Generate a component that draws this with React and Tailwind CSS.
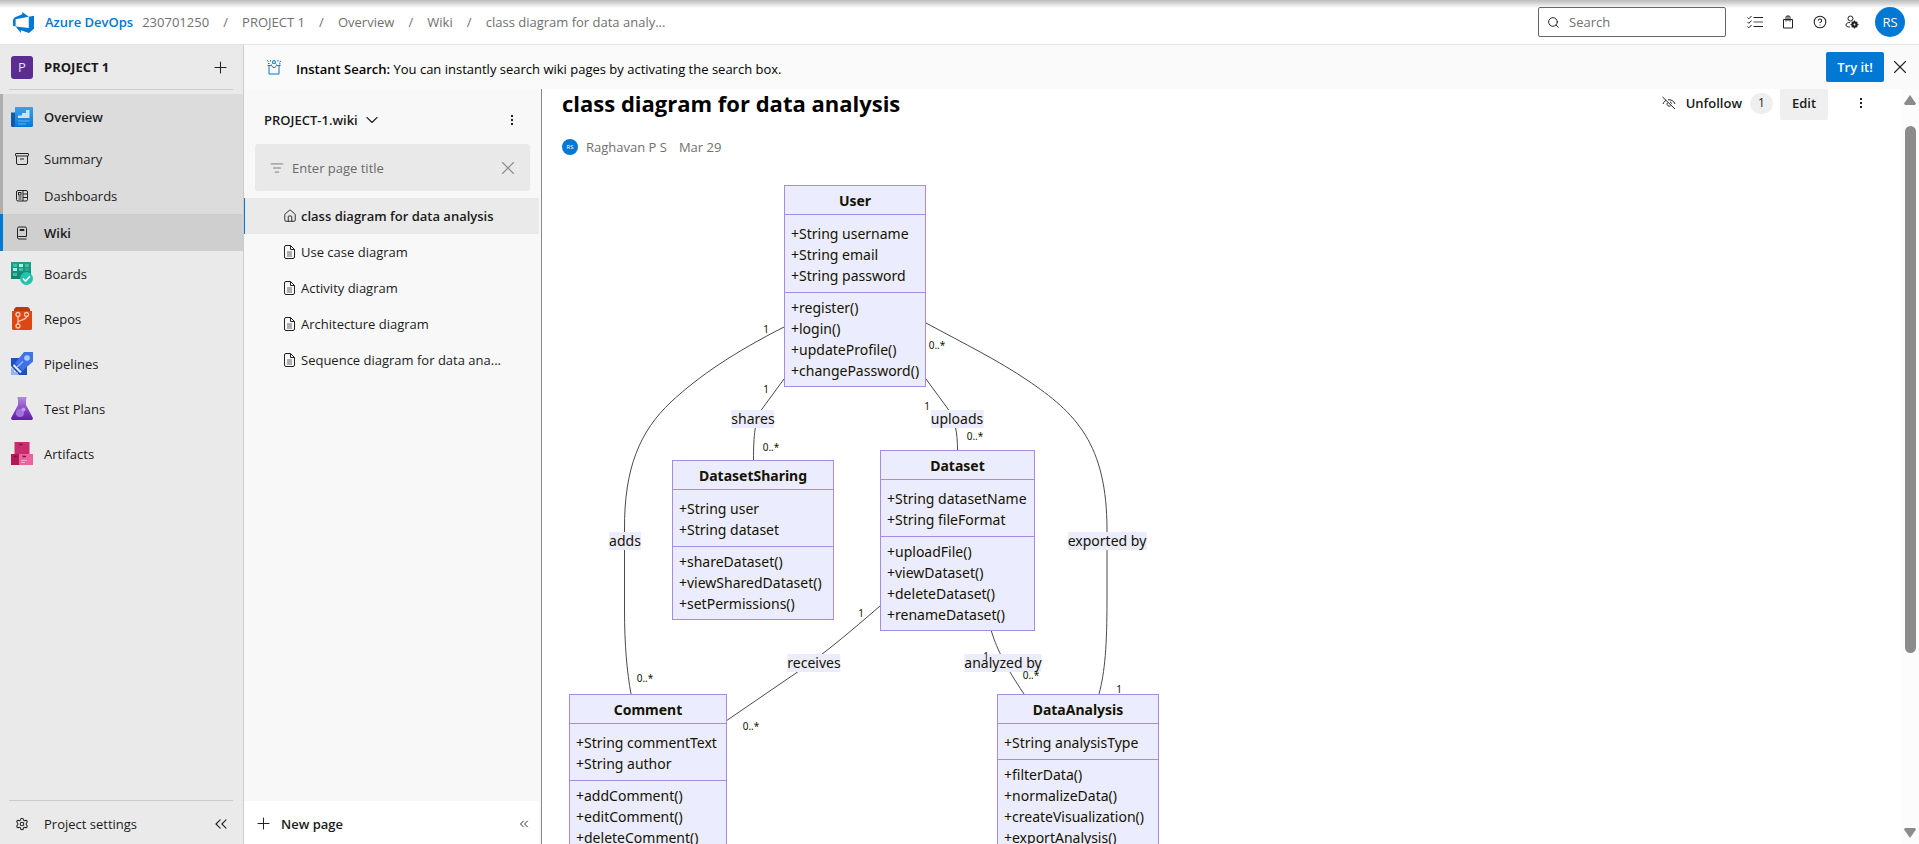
import React from "react";
import {
  Plus, X, ChevronDown, ChevronsLeft, Search, CircleHelp, Settings, House, ListFilter,
} from "lucide-react";

const ink = "stroke-[#222]";

function DevOpsLogo() {
  return (
    <svg viewBox="0 0 24 24" className="size-[21px]" fill="#0078d4" aria-hidden="true">
      <path d="M0 8.877L2.247 5.910l8.405-3.416V.022l7.370 5.393L2.966 8.338v8.225L0 15.707zm24-4.450v14.651l-5.753 4.900-9.303-3.057v3.056l-5.978-7.416 15.057 1.798V5.415z" />
    </svg>
  );
}

function MoreDots() {
  return (
    <svg viewBox="0 0 4 12" className="h-3 w-1" fill="#222" aria-hidden="true">
      <rect x="1" y="1" width="2" height="2" />
      <rect x="1" y="5" width="2" height="2" />
      <rect x="1" y="9" width="2" height="2" />
    </svg>
  );
}

function GiftIcon() {
  return (
    <svg viewBox="0 0 16 16" className="size-4" fill="none" stroke="#0078d4" aria-hidden="true">
      <path d="M1.500 6.500h4l1.500 2h2l1.500-2h4M3 6.500v8.500h10V6.500" />
      <circle cx="8" cy="3" r="1.500" />
      <path d="M5.500 5.500l1-1M10.500 5.500l-1-1M1 1.500l1.500 1M4.500 1v1.500M12 1v1.500M15 2l-1.500 1M2 4.500h1.500M13 4.800h1.500" />
    </svg>
  );
}

function TaskListIcon() {
  return (
    <svg viewBox="0 0 16 14" className="h-[14px] w-4" fill="none" stroke="#222" aria-hidden="true">
      <path d="M6.500 2.500H16M6.500 11.500H16" />
      <path d="M6.500 7H16" stroke="#8a8a8a" strokeWidth="1.500" />
      <path d="M.500 2.500l1.300 1.300L4.500 1M.500 7l1.300 1.300 2.700-2.800M.500 11.500l1.300 1.300L4.500 10" />
    </svg>
  );
}

function BagIcon() {
  return (
    <svg viewBox="0 0 14 14" className="size-[14px]" fill="none" stroke="#222" aria-hidden="true">
      <path d="M2.500 4.500h9v8.500h-9zM5 6.500V2a1 1 0 0 1 1-1h2a1 1 0 0 1 1 1v4.500M7 1v5" />
    </svg>
  );
}

function UserGearIcon() {
  return (
    <svg viewBox="0 0 14 14" className="size-[14px]" fill="none" stroke="#222" aria-hidden="true">
      <circle cx="5.500" cy="3.500" r="2.500" />
      <path d="M5 7.500C2.500 7.500 1 8.500 1 10s1.500 2 4 2" />
      <circle cx="9.500" cy="9.500" r="2.200" strokeWidth="2" />
      <path d="M9.500 5.500v8M5.500 9.500h8M6.800 6.800l5.400 5.400M12.200 6.800l-5.400 5.400" strokeWidth="1.200" />
      <circle cx="9.500" cy="9.500" r="0.900" fill="#fff" stroke="none" />
    </svg>
  );
}

function UnfollowIcon() {
  return (
    <svg viewBox="0 0 14 14" className="size-[14px]" fill="none" stroke="#222" aria-hidden="true">
      <path d="M.500 1l12.500 12" />
      <path d="M1 8c.600-1.800 1.700-3 3.200-3.700M6 3.800c3.300-.500 5.800 1.200 7 4.200" />
      <path d="M8 5.800a2.300 2.300 0 0 1 1.500 1.800M8.600 9.800A2.300 2.300 0 0 1 5.300 6.800" />
    </svg>
  );
}

function PageIcon() {
  return (
    <svg viewBox="0 0 11 14" className="h-[14px] w-[11px] shrink-0" fill="none" stroke="#222" aria-hidden="true">
      <path d="M2 .500h4.500l4 4V12a1.500 1.500 0 0 1-1.500 1.500H2A1.500 1.500 0 0 1 .500 12V2A1.500 1.500 0 0 1 2 .500z" />
      <path d="M6.500.500V4.500h4" />
      <path d="M3 7h5M3 9h5M3 11h5" stroke="#666" />
    </svg>
  );
}

function OverviewIcon() {
  return (
    <svg viewBox="0 0 22 22" className="size-[22px]" aria-hidden="true">
      <defs>
        <linearGradient id="ov" x1="0" y1="0" x2="0" y2="1">
          <stop offset="0" stopColor="#3c9fe8" /><stop offset="1" stopColor="#0a78d4" />
        </linearGradient>
      </defs>
      <path d="M0 6.500h4V21H1.500A1.500 1.500 0 0 1 0 19.500z" fill="#0f5ba7" />
      <path d="M4 1h17.200a.8.800 0 0 1 .8.800V19.500a1.500 1.500 0 0 1-1.500 1.500H2.500A1.500 1.500 0 0 0 4 19.500z" fill="url(#ov)" />
      <path d="M7 9.500h4V7h4V4h3.500V12H7z" fill="#c3e6fb" />
      <path d="M7 15h11.500M7 18h8" stroke="#5fb2ee" strokeWidth="1" />
    </svg>
  );
}

function SummaryIcon() {
  return (
    <svg viewBox="0 0 14 14" className="size-[14px]" fill="none" stroke="#222" aria-hidden="true">
      <rect x="0.500" y="1.500" width="13" height="2.500" rx="0.500" />
      <path d="M1.500 4v7a1.500 1.500 0 0 0 1.500 1.500h8a1.500 1.500 0 0 0 1.500-1.500V4M5 7h4" />
    </svg>
  );
}

function DashboardIcon() {
  return (
    <svg viewBox="0 0 14 14" className="size-[14px]" fill="none" stroke="#222" aria-hidden="true">
      <rect x="1.500" y="1.500" width="11" height="10.500" rx="1.500" />
      <path d="M8 1.500v10.500M8 5h4.500M8 8.500h4.500M3.500 8h3M3.500 10h3" />
      <rect x="3.500" y="3.500" width="2.500" height="2.500" />
    </svg>
  );
}

function WikiIcon() {
  return (
    <svg viewBox="0 0 14 14" className="size-[14px]" fill="none" stroke="#222" aria-hidden="true">
      <path d="M2.500 11.500v-9A1.500 1.500 0 0 1 4 1h6a1.500 1.500 0 0 1 1.500 1.500v8H3.500a1 1 0 0 0-1 1 1.500 1.500 0 0 0 1.500 1.500h7.500" />
      <path d="M5 3.500h4v1H5z" />
    </svg>
  );
}

function BoardsIcon() {
  return (
    <svg viewBox="0 0 22 23" className="h-[23px] w-[22px]" aria-hidden="true">
      <defs>
        <linearGradient id="bd" x1="0" y1="0" x2="0" y2="1">
          <stop offset="0" stopColor="#2c9a86" /><stop offset="1" stopColor="#12806c" />
        </linearGradient>
      </defs>
      <path d="M0 0h20v17H0z" fill="url(#bd)" />
      <path d="M2 2h4v3H2zM14 2h4v3h-4zM8 6h4v3H8zM2 11h4v3H2z" fill="#2fc7aa" />
      <path d="M8 2h4v3H8zM2 6h4v3H2z" fill="#a5f5e0" />
      <path d="M14 6h4v3h-4z" fill="#22ac93" />
      <circle cx="15.500" cy="16.500" r="6.500" fill="#20c5ad" />
      <path d="M12 16.500l2.500 2.500 4.500-4.800" stroke="#fff" strokeWidth="1.600" fill="none" />
    </svg>
  );
}

function ReposIcon() {
  return (
    <svg viewBox="0 0 22 23" className="h-[23px] w-[22px]" aria-hidden="true">
      <path d="M5 0h12l2 2v3H3V2z" fill="#b93b06" />
      <path d="M1 4h20v17.500a1.500 1.500 0 0 1-1.500 1.500h-17A1.500 1.500 0 0 1 1 21.500z" fill="#dd4714" />
      <g fill="none" stroke="#ffc5ad" strokeWidth="1.300">
        <circle cx="7" cy="7.500" r="2" />
        <circle cx="15.500" cy="7.500" r="2" />
        <circle cx="7" cy="19" r="2" />
        <path d="M7 9.500V17M15.500 9.500c0 4-7 2.500-8.500 6" />
      </g>
    </svg>
  );
}

function PipelinesIcon() {
  return (
    <svg viewBox="0 0 22 23" className="h-[23px] w-[22px]" aria-hidden="true">
      <path d="M0 6h9l7 8v9H8L0 14z" fill="#1d51bf" />
      <path d="M13 0h9v9.500L11.500 19 4 11z" fill="#3f73e4" />
      <path d="M3 12l8 8-2 1-7-7z" fill="#e4edff" />
      <circle cx="16" cy="6" r="2.800" fill="#b0c9ff" />
      <path d="M6 15l6-5.500" stroke="#9fbcff" strokeWidth="1.200" />
      <path d="M0 16l3 1v3l4 .5V23H0z" fill="#92b3f7" />
    </svg>
  );
}

function TestPlansIcon() {
  return (
    <svg viewBox="0 0 22 23" className="h-[23px] w-[22px]" aria-hidden="true">
      <defs>
        <linearGradient id="tp" x1="0" y1="0" x2="0" y2="1">
          <stop offset="0" stopColor="#b38ae0" /><stop offset="0.650" stopColor="#7d3bbd" /><stop offset="1" stopColor="#5c1fa0" />
        </linearGradient>
      </defs>
      <path d="M6.500 0h9v2H15v6l6.700 12.500a1.700 1.700 0 0 1-1.600 2.500H1.900a1.700 1.700 0 0 1-1.600-2.500L7 8V2h-.5z" fill="url(#tp)" />
      <circle cx="9" cy="16" r="4" fill="#a670dc" />
      <circle cx="12.500" cy="12.500" r="2" fill="#c197ee" />
    </svg>
  );
}

function ArtifactsIcon() {
  return (
    <svg viewBox="0 0 22 23" className="h-[23px] w-[22px]" aria-hidden="true">
      <path d="M3.500 0h15v12h-15z" fill="#cb2c6f" />
      <path d="M0 12h8v11H0z" fill="#b01a56" />
      <path d="M8 12h14v11H8z" fill="#ea639d" />
      <path d="M8 2.500h3.500M3 14.500h3.500M11.500 14.500h3.500" stroke="#8d0f41" strokeWidth="1.500" />
      <path d="M10 18.500h6M10 20.500h4" stroke="#f8a9cb" />
    </svg>
  );
}

function Breadcrumb() {
  const items = ["PROJECT 1", "Overview", "Wiki", "class diagram for data analy..."];
  return (
    <nav aria-label="Breadcrumb" className="flex items-center text-[#707070]">
      <a href="#org">230701250</a>
      {items.map((t) => (
        <React.Fragment key={t}>
          <span className="w-[33px] text-center">/</span>
          <a href="#crumb">{t}</a>
        </React.Fragment>
      ))}
    </nav>
  );
}

function TopBar() {
  return (
    <header className="flex h-[45px] shrink-0 items-center border-b border-[#e3e3e3] bg-white bg-linear-to-b from-[#bbb] via-white via-[8px] to-white pr-[14px] pl-[13px]">
      <DevOpsLogo />
      <a href="#home" className="mr-[9px] ml-[11px] font-semibold text-[#0078d4]">Azure DevOps</a>
      <Breadcrumb />
      <label className="ml-auto flex h-[30px] w-[188px] items-center gap-[9px] rounded-xs border border-[#666] bg-white px-2">
        <Search size={13} strokeWidth={1.800} className={`${ink} shrink-0`} />
        <input type="text" aria-label="Search" placeholder="Search" className="min-w-0 flex-1 outline-none placeholder:text-[#707070]" />
      </label>
      <div className="ml-[21px] flex items-center gap-[18px]">
        <button aria-label="Work items"><TaskListIcon /></button>
        <button aria-label="Marketplace"><BagIcon /></button>
        <button aria-label="Help"><CircleHelp size={14} strokeWidth={1.800} className={ink} /></button>
        <button aria-label="User settings"><UserGearIcon /></button>
      </div>
      <button aria-label="Account" className="ml-4 size-[30px] rounded-full bg-[#0078d4] text-white">RS</button>
    </header>
  );
}

function SubItem({ icon, label, active }) {
  return (
    <a
      href="#hub"
      className={
        active
          ? "flex h-[37px] items-center border-l-3 border-[#0078d4] bg-[#cfcfcf] pl-3 font-semibold"
          : "flex h-[37px] items-center border-l-3 border-[#aeaeae] pl-3"
      }
    >
      <span className="w-[29px]">{icon}</span>
      {label}
    </a>
  );
}

function HubItem({ icon, label }) {
  return (
    <a href="#hub" className="flex h-[45px] items-center pl-[11px]">
      <span className="w-[33px]">{icon}</span>
      {label}
    </a>
  );
}

function Sidebar() {
  return (
    <aside className="flex w-[244px] shrink-0 flex-col border-r border-[#cdcdcd] bg-[#eaeaea]">
      <div className="mr-[10px] ml-[9px] flex h-[45px] items-center border-b border-[#cbcbcb] pr-[3px] pl-[2px]">
        <span className="mr-[11px] flex h-[23px] w-[22px] items-center justify-center rounded-[3px] bg-[#5c2d91] text-[#e8dff2]">P</span>
        <span className="font-bold">PROJECT 1</span>
        <button aria-label="New" className="ml-auto"><Plus size={19} strokeWidth={1.300} className={ink} /></button>
      </div>
      <div className="mt-1 bg-[#dcdcdc]">
        <a href="#hub" className="flex h-[46px] items-center border-l-3 border-[#aeaeae] pl-2 font-semibold">
          <span className="w-[33px]"><OverviewIcon /></span>
          Overview
        </a>
        <SubItem icon={<SummaryIcon />} label="Summary" />
        <SubItem icon={<DashboardIcon />} label="Dashboards" />
        <SubItem icon={<WikiIcon />} label="Wiki" active />
      </div>
      <HubItem icon={<BoardsIcon />} label="Boards" />
      <HubItem icon={<ReposIcon />} label="Repos" />
      <HubItem icon={<PipelinesIcon />} label="Pipelines" />
      <HubItem icon={<TestPlansIcon />} label="Test Plans" />
      <HubItem icon={<ArtifactsIcon />} label="Artifacts" />
      <div className="mt-auto mr-[10px] ml-[9px] flex h-11 items-center border-t border-[#cbcbcb] pt-[2px] pr-[2px] pl-[6px]">
        <Settings size={14} strokeWidth={1.800} className={`${ink} mr-[15px]`} />
        <a href="#settings">Project settings</a>
        <button aria-label="Collapse navigation" className="ml-auto"><ChevronsLeft size={20} strokeWidth={1.300} className={ink} /></button>
      </div>
    </aside>
  );
}

function Banner() {
  return (
    <div className="flex h-11 shrink-0 items-center bg-[#fafafa] pr-2 pl-[22px]">
      <GiftIcon />
      <p className="ml-[14px] pt-[3px] text-black"><strong className="font-semibold">Instant Search:</strong> You can instantly search wiki pages by activating the search box.</p>
      <button className="ml-auto h-[30px] w-[58px] rounded-xs bg-[#0078d4] font-semibold text-white">Try it!</button>
      <button aria-label="Dismiss" className="ml-[5px]"><X size={22} strokeWidth={1.200} className={ink} /></button>
    </div>
  );
}

const pages = ["Use case diagram", "Activity diagram", "Architecture diagram", "Sequence diagram for data ana..."];

function WikiTree() {
  return (
    <section className="flex w-[298px] shrink-0 flex-col border-r border-[#888] bg-[#f8f8f8]">
      <div className="flex h-[55px] items-center pt-[7px] pr-[27px] pl-5">
        <button className="flex items-center gap-1 font-semibold">
          PROJECT-1.wiki
          <ChevronDown size={20} strokeWidth={1.300} className={ink} />
        </button>
        <button aria-label="More options" className="ml-auto"><MoreDots /></button>
      </div>
      <label className="mr-[11px] ml-[11px] flex h-[47px] items-center rounded-[3px] bg-[#e9e9e9] pr-[11px] pl-[15px]">
        <ListFilter size={14} strokeWidth={1.600} className="mr-2 stroke-[#777]" />
        <input type="text" aria-label="Filter pages" placeholder="Enter page title" className="min-w-0 flex-1 outline-none placeholder:text-[#6a6a6a]" />
        <X size={22} strokeWidth={1.200} className="stroke-[#888]" />
      </label>
      <ul className="mt-[7px] mr-[2px]">
        <li className="flex h-9 items-center gap-1 border-l border-[#0078d4] bg-[#eaeaea] pl-[38px] font-semibold">
          <House size={14} strokeWidth={1.600} className={ink} />
          <a href="#page">class diagram for data analysis</a>
        </li>
        {pages.map((p) => (
          <li key={p} className="flex h-9 items-center gap-[6px] pl-10">
            <PageIcon />
            <a href="#page">{p}</a>
          </li>
        ))}
      </ul>
      <div className="mt-auto mr-[2px] flex h-[43px] items-center bg-white pt-[2px] pr-2 pl-[10px]">
        <button className="flex items-center gap-2 font-semibold">
          <Plus size={19} strokeWidth={1.300} className={ink} />
          New page
        </button>
        <button aria-label="Collapse tree" className="ml-auto"><ChevronsLeft size={14} strokeWidth={1.600} className={ink} /></button>
      </div>
    </section>
  );
}

const classes = [
  { name: "User", at: "left-[222px] top-[15px] w-[142px]", attrs: ["+String username", "+String email", "+String password"], methods: ["+register()", "+login()", "+updateProfile()", "+changePassword()"] },
  { name: "DatasetSharing", at: "left-[110px] top-[290px] w-[162px]", attrs: ["+String user", "+String dataset"], methods: ["+shareDataset()", "+viewSharedDataset()", "+setPermissions()"] },
  { name: "Dataset", at: "left-[318px] top-[280px] w-[155px]", attrs: ["+String datasetName", "+String fileFormat"], methods: ["+uploadFile()", "+viewDataset()", "+deleteDataset()", "+renameDataset()"] },
  { name: "Comment", at: "left-[7px] top-[524px] w-[158px]", attrs: ["+String commentText", "+String author"], methods: ["+addComment()", "+editComment()", "+deleteComment()"] },
  { name: "DataAnalysis", at: "left-[435px] top-[524px] w-[162px]", attrs: ["+String analysisType"], methods: ["+filterData()", "+normalizeData()", "+createVisualization()", "+exportAnalysis()"] },
];

const edgeLabels = [
  { text: "shares", at: "left-[191px] top-[249px]" },
  { text: "uploads", at: "left-[395px] top-[249px]" },
  { text: "adds", at: "left-[63px] top-[371px]" },
  { text: "exported by", at: "left-[545px] top-[371px]" },
  { text: "receives", at: "left-[252px] top-[493px]" },
  { text: "analyzed by", at: "left-[441px] top-[493px]" },
];

const cardinalities = [
  { text: "1", at: "left-[204px] top-[159px]" },
  { text: "0..*", at: "left-[375px] top-[175px]" },
  { text: "1", at: "left-[204px] top-[219px]" },
  { text: "0..*", at: "left-[209px] top-[277px]" },
  { text: "1", at: "left-[365px] top-[236px]" },
  { text: "0..*", at: "left-[413px] top-[266px]" },
  { text: "1", at: "left-[299px] top-[443px]" },
  { text: "0..*", at: "left-[83px] top-[508px]" },
  { text: "0..*", at: "left-[189px] top-[556px]" },
  { text: "1", at: "left-[424px] top-[486px]" },
  { text: "0..*", at: "left-[469px] top-[505px]" },
  { text: "1", at: "left-[557px] top-[519px]" },
];

function ClassBox({ name, at, attrs, methods }) {
  return (
    <div className={`${at} absolute divide-y divide-[#a98be3] border border-[#a98be3] bg-[#ececff] leading-[21px]`}>
      <h2 className="h-[29px] pt-1 text-center font-bold">{name}</h2>
      <ul className="pt-2 pb-[6px] pl-[6px]">{attrs.map((a) => <li key={a}>{a}</li>)}</ul>
      <ul className="pt-1 pb-[5px] pl-[6px]">{methods.map((m) => <li key={m}>{m}</li>)}</ul>
    </div>
  );
}

function Diagram() {
  return (
    <div className="relative mt-[14px] h-[700px] font-['Trebuchet_MS','Noto_Sans',sans-serif] text-[14px] whitespace-nowrap text-[#131300]">
      <svg width="620" height="700" viewBox="562 170 620 700" className="absolute top-0 left-0" fill="none" stroke="#4a4a4a" aria-hidden="true">
        <path d="M784 327C735 352 700 375 671 402C640 431 624 468 624.500 530V610C624.500 645 627 672 631 694" />
        <path d="M784 379L762 409C755 420 753.500 435 753.500 460" />
        <path d="M926 379L948 409C955 420 957.500 432 957.500 450" />
        <path d="M926 323C965 344 999 361 1027 380C1076 413 1107 444 1107 530V600C1107 645 1105 672 1099 694" />
        <path d="M880 606C850 632 825 653 799 671L726 721" />
        <path d="M991 630C996 646 1003 663 1024 694" />
      </svg>
      {classes.map((c) => <ClassBox key={c.name} {...c} />)}
      {edgeLabels.map((l) => (
        <span key={l.text} className={`${l.at} absolute -translate-1/2 bg-[#ececff] leading-[18px]`}>{l.text}</span>
      ))}
      {cardinalities.map((c) => (
        <span key={c.at} className={`${c.at} absolute -translate-1/2 text-[10px] leading-3`}>{c.text}</span>
      ))}
    </div>
  );
}

function Article() {
  return (
    <main className="min-w-0 flex-1 overflow-hidden bg-white pl-5">
      <div className="-mt-[3px] flex h-[34px] items-center pr-[38px]">
        <h1 className="text-[22px] leading-7 font-bold text-black">class diagram for data analysis</h1>
        <div className="ml-auto"><UnfollowIcon /></div>
        <button className="ml-[10px] font-semibold">Unfollow</button>
        <span className="ml-2 flex h-[21px] w-[23px] items-center justify-center rounded-full bg-[#efefef] text-xs">1</span>
        <button className="ml-[7px] h-[34px] w-12 rounded-xs bg-[#efefef] font-semibold">Edit</button>
        <button aria-label="More actions" className="ml-[31px]"><MoreDots /></button>
      </div>
      <div className="mt-[18px] flex h-[18px] items-center text-[#707070]">
        <span className="mr-2 flex size-4 items-center justify-center rounded-full bg-[#0078d4] text-[6px] text-white">RS</span>
        <span className="mr-3">Raghavan P S</span>
        <span>Mar 29</span>
      </div>
      <Diagram />
    </main>
  );
}

function Scrollbar() {
  return (
    <div className="flex w-[18px] shrink-0 flex-col items-center bg-[#fcfcfc] py-[6px]" aria-hidden="true">
      <svg viewBox="0 0 12 10" className="mb-[21px] h-[10px] w-3" fill="#8b8b8b"><path d="M6 0l6 8.500-1 1.500H1L0 8.500z" /></svg>
      <div className="min-h-0 flex-1">
        <div className="h-3/4 w-[11px] rounded-full bg-[#8b8b8b]" />
      </div>
      <svg viewBox="0 0 12 10" className="h-[10px] w-3" fill="#8b8b8b"><path d="M6 10l6-8.500L11 0H1L0 1.500z" /></svg>
    </div>
  );
}

export default function App() {
  return (
    <div className="flex h-screen flex-col overflow-hidden font-['Segoe_UI','Open_Sans',sans-serif] text-[13px] leading-5 text-[#1b1b1b]">
      <TopBar />
      <div className="flex min-h-0 flex-1">
        <Sidebar />
        <div className="flex min-w-0 flex-1 flex-col">
          <Banner />
          <div className="flex min-h-0 flex-1">
            <WikiTree />
            <Article />
            <Scrollbar />
          </div>
        </div>
      </div>
    </div>
  );
}
